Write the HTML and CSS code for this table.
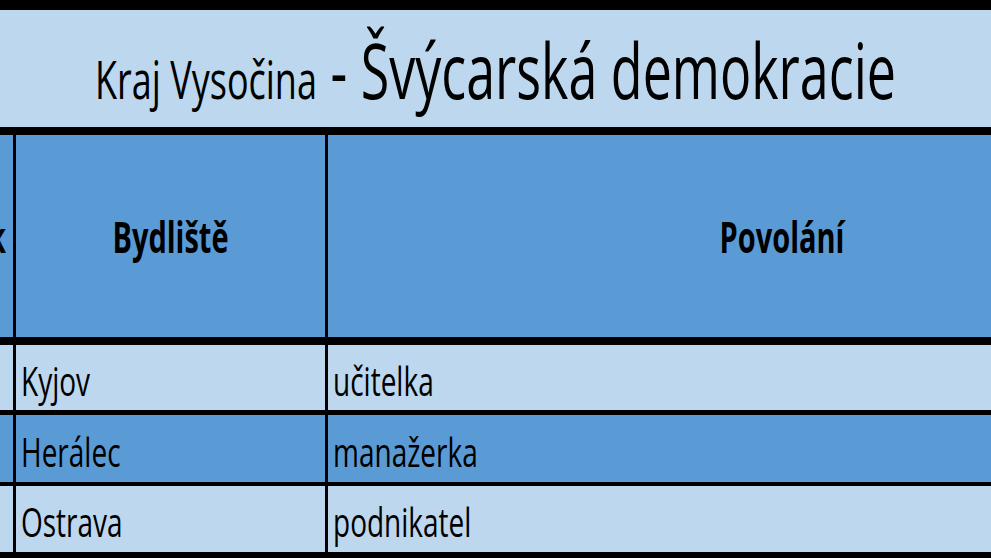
FILE: index.html
```html
<!DOCTYPE html>
<html lang="cs">
<head>
<meta charset="utf-8">
<title>Kraj Vysočina - Švýcarská demokracie</title>
<link rel="stylesheet" href="styles.css">
</head>
<body>
<div class="slide">
  <div class="title-row">
    <div class="title"><span class="title-small">Kraj Vysočina</span><span class="title-big"> - Švýcarská demokracie</span></div>
  </div>
  <div class="trow head">
    <div class="cell c1"><span class="txt">Věk</span></div>
    <div class="cell c2"><span class="txt">Bydliště</span></div>
    <div class="cell c3"><span class="txt">Povolání</span></div>
  </div>
  <div class="trow light r1">
    <div class="cell c1"></div>
    <div class="cell c2"><span class="txt">Kyjov</span></div>
    <div class="cell c3"><span class="txt">učitelka</span></div>
  </div>
  <div class="trow dark r2">
    <div class="cell c1"></div>
    <div class="cell c2"><span class="txt">Herálec</span></div>
    <div class="cell c3"><span class="txt">manažerka</span></div>
  </div>
  <div class="trow light r3">
    <div class="cell c1"></div>
    <div class="cell c2"><span class="txt">Ostrava</span></div>
    <div class="cell c3"><span class="txt">podnikatel</span></div>
  </div>
</div>
</body>
</html>
```
FILE: styles.css
```css
html, body {
  margin: 0;
  padding: 0;
  background: #000;
}
.slide {
  width: 991px;
  height: 558px;
  overflow: hidden;
  background: #000;
  display: flex;
  flex-direction: column;
  padding-top: 10px;
  box-sizing: border-box;
  font-family: "Open Sans", "Noto Sans", sans-serif;
  color: #000;
}
.title-row {
  height: 117px;
  flex: none;
  background: #bdd7ee;
  display: flex;
  align-items: center;
  justify-content: center;
  padding-top: 0;
  box-sizing: border-box;
}
.title {
  display: inline-block;
  white-space: pre;
  transform: scaleY(1.48);
  line-height: 1;
  font-size: 52px;
}
.title-small {
  font-size: 36px;
}
.title-big {
  font-size: 52px;
}
.trow {
  flex: none;
  display: grid;
  grid-template-columns: 13px 309px 908px;
  column-gap: 3px;
  background: #000;
}
.head {
  height: 202px;
  margin-top: 8px;
}
.r1 {
  height: 65px;
  margin-top: 8px;
}
.r2 {
  height: 67px;
  margin-top: 5px;
}
.r3 {
  height: 66px;
  margin-top: 4px;
}
.cell {
  display: flex;
  align-items: center;
  overflow: hidden;
  white-space: nowrap;
}
.head .cell {
  background: #5b9bd5;
  justify-content: center;
  font-weight: 700;
  font-size: 29px;
}
.head .c1 {
  justify-content: flex-end;
  padding-right: 7px;
}
.light .cell {
  background: #bdd7ee;
}
.dark .cell {
  background: #5b9bd5;
}
.light .cell, .dark .cell {
  font-size: 28px;
  padding-left: 5px;
  padding-top: 4px;
  box-sizing: border-box;
}
.txt {
  display: inline-block;
  line-height: 1;
  transform: scaleY(1.45);
}
```
